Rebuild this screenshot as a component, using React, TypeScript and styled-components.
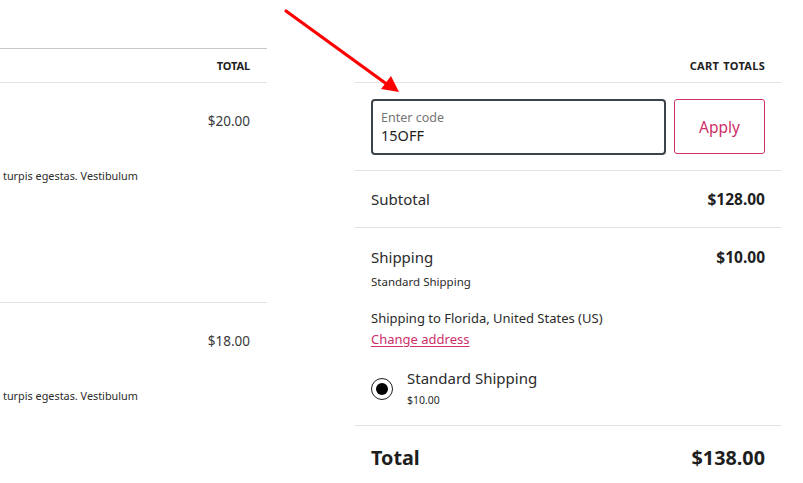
import React from "react";
import styled, { createGlobalStyle } from "styled-components";

const GlobalStyle = createGlobalStyle`
  html, body { margin: 0; padding: 0; background: #fff; }
  body {
    font-family: "Noto Sans", "Open Sans", sans-serif;
    color: #2b2b2b;
    width: 803px;
    height: 483px;
    overflow: hidden;
  }
  #root { height: 483px; overflow: hidden; }
  * { box-sizing: border-box; }
`;

const Page = styled.div`
  position: relative;
  display: flex;
  align-items: flex-start;
  gap: 88px;
  padding-top: 48px;
  width: 803px;
  height: 483px;
  overflow: hidden;
`;

const LeftTable = styled.section`
  width: 267px;
  flex: none;
`;

const LeftHead = styled.div`
  height: 35px;
  border-top: 1px solid #c6c6c6;
  border-bottom: 1px solid #e2e2e2;
  display: flex;
  align-items: center;
  justify-content: flex-end;
  padding-right: 17px;
`;

const HeadLabel = styled.span<{ $wide?: boolean }>`
  font-size: 11px;
  font-weight: 700;
  text-transform: uppercase;
  color: #1e1e1e;
  letter-spacing: ${(p) => (p.$wide ? "0.3px" : "-0.1px")};
  word-spacing: ${(p) => (p.$wide ? "1px" : "0")};
`;

const ItemRow = styled.div`
  height: 220px;
  border-bottom: 1px solid #e2e2e2;
  display: flex;
  flex-direction: column;
  padding-top: 28px;
`;

const ItemPrice = styled.div`
  align-self: flex-end;
  padding-right: 17px;
  font-size: 13.5px;
  line-height: 20px;
  color: #3a3a3a;
`;

const ItemDesc = styled.div`
  margin-top: 37px;
  padding-left: 3px;
  font-size: 10.85px;
  line-height: 16px;
  color: #2b2b2b;
`;

const Totals = styled.section`
  width: 426px;
  flex: none;
`;

const TotalsHead = styled.div`
  height: 35px;
  border-bottom: 1px solid #e2e2e2;
  display: flex;
  align-items: center;
  justify-content: flex-end;
  padding-right: 16px;
`;

const Coupon = styled.form`
  display: flex;
  gap: 8px;
  padding: 16px 16px 15px;
  border-bottom: 1px solid #e2e2e2;
`;

const CodeField = styled.label`
  flex: 1;
  height: 56px;
  border: 2px solid #3c434a;
  border-radius: 4px;
  display: flex;
  flex-direction: column;
  justify-content: center;
  padding: 0 8px;
`;

const FieldLabel = styled.span`
  font-size: 12.5px;
  line-height: 17px;
  color: #757575;
`;

const FieldValue = styled.span`
  font-size: 14.5px;
  line-height: 19px;
  color: #1e1e1e;
`;

const ApplyButton = styled.button`
  width: 91px;
  height: 55px;
  border: 1px solid #cc2f6a;
  border-radius: 3px;
  background: #fff;
  color: #cc2f6a;
  font-family: inherit;
  font-size: 15.5px;
  cursor: pointer;
`;

const LineRow = styled.div`
  height: 57px;
  border-bottom: 1px solid #e2e2e2;
  display: flex;
  align-items: center;
  justify-content: space-between;
  padding: 0 16px;
`;

const RowLabel = styled.span`
  font-size: 15px;
  line-height: 24px;
  color: #2b2b2b;
`;

const RowValue = styled.span`
  font-size: 15.5px;
  line-height: 24px;
  font-weight: 700;
  color: #1e1e1e;
`;

const ShippingBlock = styled.div`
  height: 198px;
  border-bottom: 1px solid #e2e2e2;
  padding: 17px 16px 0;
  display: flex;
  flex-direction: column;
`;

const ShippingTop = styled.div`
  display: flex;
  justify-content: space-between;
`;

const SmallNote = styled.span`
  margin-top: 4px;
  font-size: 11.5px;
  line-height: 18px;
  color: #2b2b2b;
`;

const Destination = styled.span`
  margin-top: 17px;
  font-size: 13px;
  line-height: 21px;
  color: #2b2b2b;
`;

const ChangeLink = styled.a`
  align-self: flex-start;
  font-size: 13px;
  line-height: 21px;
  color: #cc2f6a;
  text-decoration: underline;
  text-underline-offset: 2px;
`;

const RateOption = styled.label`
  margin-top: 16px;
  display: flex;
  align-items: center;
  gap: 14px;
`;

const Radio = styled.span`
  width: 22px;
  height: 22px;
  border-radius: 50%;
  border: 1.5px solid #1e1e1e;
  display: flex;
  align-items: center;
  justify-content: center;
  flex: none;
  margin-top: 4px;

  &::after {
    content: "";
    width: 12px;
    height: 12px;
    border-radius: 50%;
    background: #000;
  }
`;

const RateText = styled.span`
  display: flex;
  flex-direction: column;
`;

const RateName = styled.span`
  font-size: 15px;
  line-height: 24px;
  color: #2b2b2b;
`;

const RatePrice = styled.span`
  margin-top: 2px;
  font-size: 10.5px;
  line-height: 16px;
  color: #2b2b2b;
`;

const GrandRow = styled.div`
  display: flex;
  justify-content: space-between;
  padding: 18px 16px 0;
`;

const GrandText = styled.span`
  font-size: 19.8px;
  line-height: 28px;
  font-weight: 700;
  color: #1e1e1e;
`;

const Arrow = styled.svg`
  position: absolute;
  left: 0;
  top: 0;
  pointer-events: none;
`;

export default function App() {
  return (
    <>
      <GlobalStyle />
      <Page>
        <LeftTable>
          <LeftHead>
            <HeadLabel>Total</HeadLabel>
          </LeftHead>
          <ItemRow>
            <ItemPrice>$20.00</ItemPrice>
            <ItemDesc>turpis egestas. Vestibulum</ItemDesc>
          </ItemRow>
          <ItemRow>
            <ItemPrice>$18.00</ItemPrice>
            <ItemDesc>turpis egestas. Vestibulum</ItemDesc>
          </ItemRow>
        </LeftTable>

        <Totals>
          <TotalsHead>
            <HeadLabel $wide>Cart totals</HeadLabel>
          </TotalsHead>
          <Coupon onSubmit={(e) => e.preventDefault()}>
            <CodeField>
              <FieldLabel>Enter code</FieldLabel>
              <FieldValue>15OFF</FieldValue>
            </CodeField>
            <ApplyButton type="submit">Apply</ApplyButton>
          </Coupon>
          <LineRow>
            <RowLabel>Subtotal</RowLabel>
            <RowValue>$128.00</RowValue>
          </LineRow>
          <ShippingBlock>
            <ShippingTop>
              <RowLabel>Shipping</RowLabel>
              <RowValue>$10.00</RowValue>
            </ShippingTop>
            <SmallNote>Standard Shipping</SmallNote>
            <Destination>Shipping to Florida, United States (US)</Destination>
            <ChangeLink href="#">Change address</ChangeLink>
            <RateOption>
              <Radio />
              <RateText>
                <RateName>Standard Shipping</RateName>
                <RatePrice>$10.00</RatePrice>
              </RateText>
            </RateOption>
          </ShippingBlock>
          <GrandRow>
            <GrandText>Total</GrandText>
            <GrandText>$138.00</GrandText>
          </GrandRow>
        </Totals>

        <Arrow width="803" height="483" viewBox="0 0 803 483">
          <line x1="286" y1="11" x2="388" y2="85" stroke="#ff0000" strokeWidth="3.2" strokeLinecap="round" />
          <polygon points="399,92 381,89 391,76" fill="#ff0000" />
        </Arrow>
      </Page>
    </>
  );
}
